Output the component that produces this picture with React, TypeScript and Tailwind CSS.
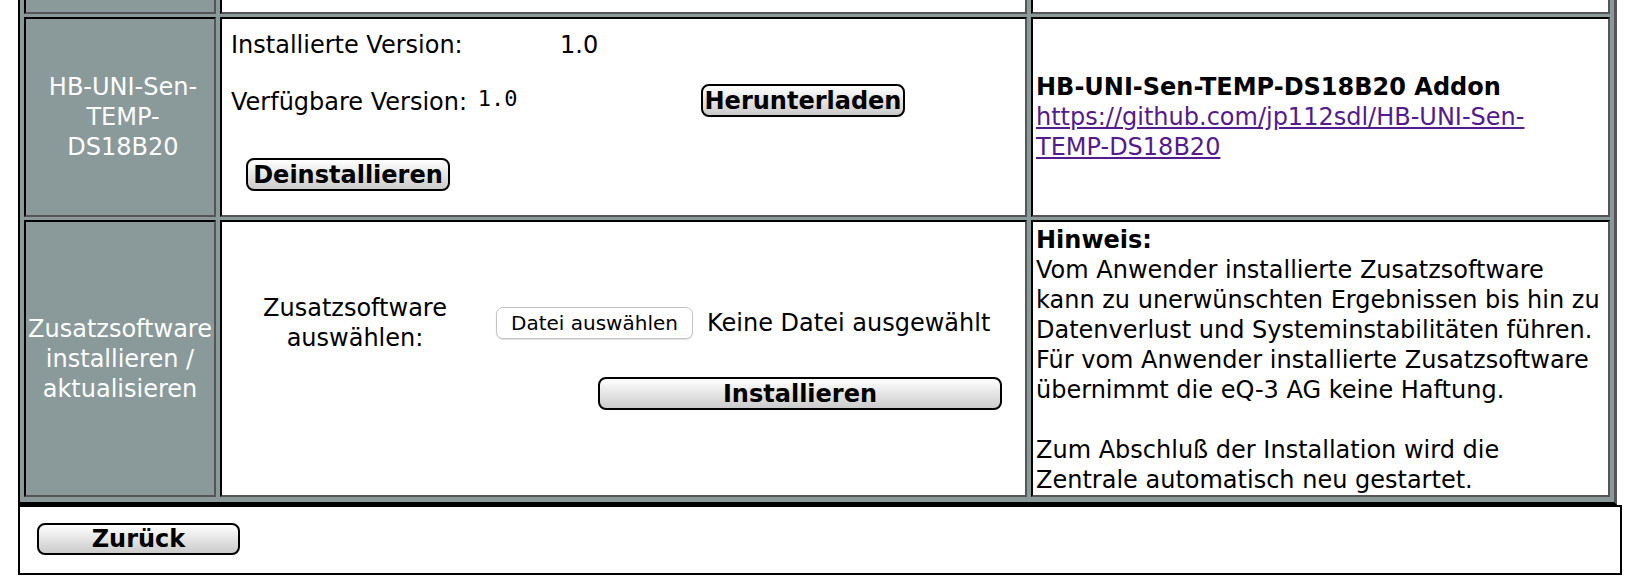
import React from "react";

function Btn({ w, children }: { w: string; children: React.ReactNode }) {
  return (
    <button
      className={`${w} h-[33px] rounded-[8px] border-2 border-black bg-linear-to-b from-white to-[#cbcbcb] font-bold text-[24px] leading-[28px] text-black flex items-center justify-center`}
    >
      {children}
    </button>
  );
}

const cell = "border-2 border-t-black border-l-black border-r-[#555] border-b-[#555]";

export default function App() {
  return (
    <div className="w-[1648px] h-[588px] overflow-hidden bg-white text-black font-['DejaVu_Sans',Verdana,sans-serif] text-[24px] leading-[30px]">
      <div className="ml-[18px] w-[1599px] bg-[#8a999a] border-l-2 border-l-black border-r-[3px] border-r-[#555] border-b-[3px] border-b-black pl-[4px] pr-[4px] pb-[5px] grid grid-cols-[192px_807px_579px] grid-rows-[14px_200px_277px] gap-x-[4px] gap-y-[3px]">
        {/* partial row at top */}
        <div className={`${cell} border-t-0 bg-[#8a999a]`} />
        <div className={`${cell} border-t-0 bg-white`} />
        <div className={`${cell} border-t-0 bg-white`} />

        {/* row: HB-UNI-Sen-TEMP-DS18B20 */}
        <div className={`${cell} bg-[#8a999a] text-white flex items-center justify-center text-center pl-[6px]`}>
          <div>
            HB-UNI-Sen-
            <br />
            TEMP-
            <br />
            DS18B20
          </div>
        </div>
        <div className={`${cell} bg-white pl-[9px] pt-[11px]`}>
          <div className="flex h-[30px] items-center">
            <span className="w-[329px] whitespace-nowrap">Installierte Version:</span>
            <span>1.0</span>
          </div>
          <div className="mt-[24px] flex h-[33px] items-center">
            <span className="w-[470px] whitespace-nowrap">
              Verfügbare Version:{" "}
              <span className="ml-[3px] align-[4px] font-['DejaVu_Sans_Mono',monospace] text-[22px]">1.0</span>
            </span>
            <Btn w="w-[204px]">Herunterladen</Btn>
          </div>
          <div className="mt-[41px] pl-[15px]">
            <Btn w="w-[204px]">Deinstallieren</Btn>
          </div>
        </div>
        <div className={`${cell} bg-white pl-[3px] flex flex-col justify-center whitespace-nowrap`}>
          <div className="font-bold">HB-UNI-Sen-TEMP-DS18B20 Addon</div>
          <a href="#" className="text-[#551a8b] underline">
            https://github.com/jp112sdl/HB-UNI-Sen-
            <br />
            TEMP-DS18B20
          </a>
        </div>

        {/* row: Zusatzsoftware */}
        <div className={`${cell} bg-[#8a999a] text-white flex items-center justify-center text-center`}>
          <div>
            Zusatzsoftware
            <br />
            installieren /
            <br />
            aktualisieren
          </div>
        </div>
        <div className={`${cell} bg-white pt-[71px]`}>
          <div className="flex h-[60px] items-center">
            <div className="ml-[18px] w-[230px] text-center">
              Zusatzsoftware
              <br />
              auswählen:
            </div>
            <button className="ml-[26px] w-[197px] h-[32px] rounded-[7px] border border-[#c4c4c4] bg-white shadow-[0_1px_1px_rgba(0,0,0,0.12)] text-[20px] leading-[24px] text-black flex items-center justify-center whitespace-nowrap">
              Datei auswählen
            </button>
            <span className="ml-[14px] whitespace-nowrap">Keine Datei ausgewählt</span>
          </div>
          <div className="mt-[24px] ml-[376px]">
            <Btn w="w-[404px]">Installieren</Btn>
          </div>
        </div>
        <div className={`${cell} bg-white pl-[3px] pt-[3px] whitespace-nowrap`}>
          <div className="font-bold">Hinweis:</div>
          <div>Vom Anwender installierte Zusatzsoftware</div>
          <div>kann zu unerwünschten Ergebnissen bis hin zu</div>
          <div>Datenverlust und Systeminstabilitäten führen.</div>
          <div>Für vom Anwender installierte Zusatzsoftware</div>
          <div>übernimmt die eQ-3 AG keine Haftung.</div>
          <div className="h-[30px]" />
          <div>Zum Abschluß der Installation wird die</div>
          <div>Zentrale automatisch neu gestartet.</div>
        </div>
      </div>

      <div className="ml-[18px] w-[1604px] h-[70px] border-2 border-black bg-white pl-[17px] pt-[16px]">
        <Btn w="w-[203px] !h-[32px]">Zurück</Btn>
      </div>
    </div>
  );
}
